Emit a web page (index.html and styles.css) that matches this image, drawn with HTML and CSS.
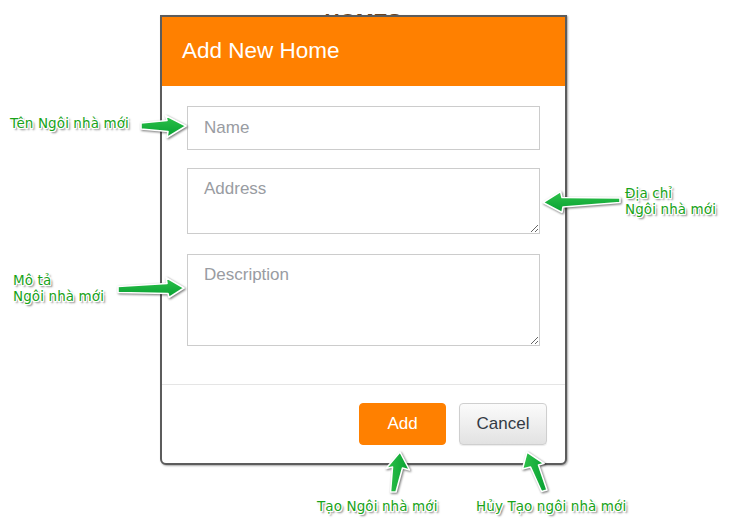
FILE: index.html
```html
<!DOCTYPE html>
<html lang="vi">
<head>
<meta charset="utf-8">
<title>Add New Home</title>
<link rel="stylesheet" href="styles.css">
</head>
<body>
<div class="page">
  <h1 class="bg-title">HOMES</h1>
</div>

<div class="modal">
  <div class="modal-header">
    <h2 class="modal-title">Add New Home</h2>
  </div>
  <div class="modal-body">
    <input class="field field-name" type="text" placeholder="Name">
    <textarea class="field field-address" placeholder="Address"></textarea>
    <textarea class="field field-desc" placeholder="Description"></textarea>
  </div>
  <div class="modal-footer">
    <button class="btn btn-add" type="button">Add</button>
    <button class="btn btn-cancel" type="button">Cancel</button>
  </div>
</div>

<svg class="arrows" width="736" height="528" viewBox="0 0 736 528" xmlns="http://www.w3.org/2000/svg">
  <defs>
    <linearGradient id="gh" x1="0" y1="0" x2="0" y2="1">
      <stop offset="0" stop-color="#2fc24a"/>
      <stop offset="1" stop-color="#06a032"/>
    </linearGradient>
    <linearGradient id="gv" x1="0" y1="0" x2="1" y2="0">
      <stop offset="0" stop-color="#2fc24a"/>
      <stop offset="1" stop-color="#06a032"/>
    </linearGradient>
  </defs>
  <g class="arrow-shapes">
    <polygon fill="url(#gh)" points="141,123 167,120.5 165.5,115.5 186,126 167,137.5 168,131.5 141,129"/>
    <polygon fill="url(#gh)" points="118,286.5 167,283.5 166,277.5 184,288 169,297.5 168,293.5 118,292.5"/>
    <polygon fill="url(#gh)" points="620,198 562,197.5 560.5,191.5 543,202.5 562,212.5 563,207 620,202.5"/>
    <polygon fill="url(#gv)" points="400,452 409.5,470 402.5,468 396,492 390.5,492 392.5,467 386,468.5"/>
    <polygon fill="url(#gv)" points="527,452 544,463.5 538.5,465 547,490 541.5,491.5 530.5,467 522.5,469"/>
  </g>
</svg>

<div class="note note-name">Tên Ngôi nhà mới</div>
<div class="note note-desc">Mô tả<br>Ngôi nhà mới</div>
<div class="note note-address">Địa chỉ<br>Ngôi nhà mới</div>
<div class="note note-add">Tạo Ngôi nhà mới</div>
<div class="note note-cancel">Hủy Tạo ngôi nhà mới</div>
</body>
</html>
```

FILE: styles.css
```css
html, body {
  margin: 0;
  padding: 0;
}

body {
  position: relative;
  width: 736px;
  height: 528px;
  overflow: hidden;
  background: #ffffff;
  font-family: "Liberation Sans", Arial, sans-serif;
}

.page {
  padding-top: 10px;
}

.bg-title {
  margin: 0;
  padding-right: 10px;
  text-align: center;
  font-size: 21px;
  line-height: 22px;
  font-weight: bold;
  color: #6a4522;
}

.modal {
  position: absolute;
  left: 160px;
  top: 15px;
  width: 403px;
  border: 2px solid #5c5c5c;
  border-radius: 0 0 6px 6px;
  background: #ffffff;
  box-shadow: 1px 1px 2px rgba(0, 0, 0, 0.35);
  overflow: hidden;
}

.modal-header {
  background: #ff8000;
  height: 69px;
}

.modal-title {
  margin: 0;
  padding-left: 20px;
  font-size: 22.5px;
  font-weight: normal;
  line-height: 67px;
  color: #ffffff;
}

.modal-body {
  display: flex;
  flex-direction: column;
  padding: 20px 25px 38px;
}

.field {
  display: block;
  box-sizing: border-box;
  width: 353px;
  margin: 0;
  border: 1px solid #cccccc;
  border-radius: 0;
  background: #ffffff;
  font-family: "Liberation Sans", Arial, sans-serif;
  font-size: 17px;
  color: #333333;
  outline: none;
}

.field::placeholder {
  color: #999ca2;
}

.field-name {
  height: 44px;
  padding: 0 16px;
  margin-bottom: 18px;
}

.field-address,
.field-desc {
  padding: 10px 16px;
  line-height: 20px;
  resize: vertical;
}

.field-address {
  height: 66px;
  margin-bottom: 20px;
}

.field-desc {
  height: 92px;
}

.modal-footer {
  display: flex;
  justify-content: flex-end;
  gap: 13px;
  border-top: 1px solid #e5e5e5;
  padding: 18px 18px 18px 0;
}

.btn {
  height: 42px;
  margin: 0;
  border-radius: 4px;
  font-family: "Liberation Sans", Arial, sans-serif;
  font-size: 17px;
  cursor: pointer;
}

.btn-add {
  width: 87px;
  border: 1px solid #ff8000;
  background: #ff8000;
  color: #ffffff;
}

.btn-cancel {
  width: 88px;
  border: 1px solid #cfcfcf;
  background: linear-gradient(to bottom, #fbfbfb 0%, #e2e2e2 100%);
  color: #333a44;
  box-shadow: 0 1px 1px rgba(0, 0, 0, 0.08);
}

.arrows {
  position: absolute;
  left: 0;
  top: 0;
  pointer-events: none;
}

.arrow-shapes polygon {
  stroke: #ffffff;
  stroke-width: 1.6;
  stroke-linejoin: round;
  filter: drop-shadow(1.5px 1.5px 1.2px rgba(0, 0, 0, 0.55));
}

.note {
  position: absolute;
  font-family: "DejaVu Sans", Verdana, sans-serif;
  font-size: 13.5px;
  line-height: 16px;
  letter-spacing: 0.1px;
  color: #19a319;
  white-space: nowrap;
  text-shadow:
    -1px 0 #fff, 1px 0 #fff, 0 -1px #fff, 0 1px #fff,
    -1px -1px #fff, 1px 1px #fff, -1px 1px #fff, 1px -1px #fff,
    2px 2px 2px rgba(0, 0, 0, 0.6);
}

.note-name {
  left: 10px;
  top: 114.5px;
}

.note-desc {
  left: 13px;
  top: 272px;
}

.note-address {
  left: 625px;
  top: 185px;
}

.note-add {
  left: 317px;
  top: 498px;
}

.note-cancel {
  left: 476px;
  top: 498px;
}
```
